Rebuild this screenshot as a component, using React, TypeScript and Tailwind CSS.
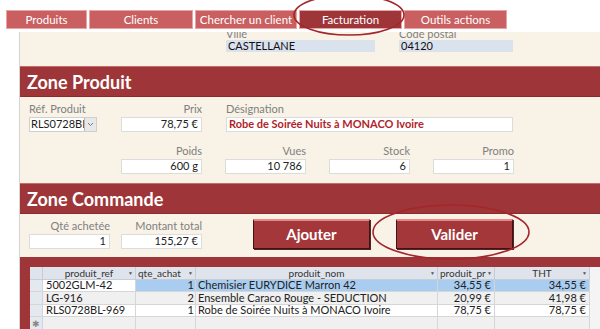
import * as React from "react"

const tabs = [
  { name: "Produits", w: "w-[81px]" },
  { name: "Clients", w: "w-[104px]" },
  { name: "Chercher un client", w: "w-[102px]" },
  { name: "Facturation", w: "w-[103px]", active: true },
  { name: "Outils actions", w: "w-[103px]" },
]

const rows = [
  { ref: "5002GLM-42", qte: "1", nom: "Chemisier EURYDICE Marron 42", prix: "34,55 €", tht: "34,55 €", selected: true },
  { ref: "LG-916", qte: "2", nom: "Ensemble Caraco Rouge - SEDUCTION", prix: "20,99 €", tht: "41,98 €", alt: true },
  { ref: "RLS0728BL-969", qte: "1", nom: "Robe de Soirée Nuits à MONACO Ivoire", prix: "78,75 €", tht: "78,75 €" },
]

// produit_pr : en-tête tronqué comme dans Access
const columns = [
  { name: "produit_ref", w: "w-[93px]" },
  { name: "qte_achat", w: "w-[60px]", left: true },
  { name: "produit_nom", w: "w-[242px]" },
  { name: "produit_pr", w: "w-[57px]", left: true },
  { name: "THT", w: "w-[95px]" },
]

// Champ de formulaire : libellé au-dessus, zone de texte en dessous
const Field = ({ label, value, w, align = "right" }: { label: string; value: string; w: string; align?: "left" | "right" }) => (
  <div className={`flex flex-col ${w}`}>
    <span className={`h-[12px] text-[11px] leading-[12px] text-[#808080] ${align === "right" ? "text-right" : "text-left"}`}>{label}</span>
    <div className={`mt-[2px] flex h-[15px] items-center border border-[#dcdcdc] bg-white px-[3px] text-[11px] text-[#222] ${align === "right" ? "justify-end" : "justify-start"}`}>
      {value}
    </div>
  </div>
)

const Band = ({ title }: { title: string }) => (
  <div className="flex h-[31px] shrink-0 items-center border-t border-[#c76a6a] border-b border-b-[#8a2a2c] bg-[#9e3538] pl-[7px]">
    <span className="text-[18px] font-bold leading-none text-white">{title}</span>
  </div>
)

const ActionButton = ({ label }: { label: string }) => (
  <button className="flex h-[30px] w-[117px] items-center justify-center border border-[#3d1416] border-t-[2px] border-t-[#e58a8a] bg-[#a3373a] text-[15px] font-bold text-white shadow-[1px_1px_0_#5a2224]">
    {label}
  </button>
)

export default function App() {
  return (
    <div className="relative h-[329px] w-[600px] overflow-hidden bg-white font-['Lato','Open_Sans',sans-serif]">
      {/* Onglets */}
      <div className="flex h-[32px] items-start gap-[2px] pl-[6px] pt-[10px]">
        {tabs.map((t) => (
          <div
            key={t.name}
            className={`flex h-[19px] items-center justify-center border border-[#e6a4a4] text-[11.5px] text-white ${t.w} ${t.active ? "bg-[#9e3538]" : "bg-[#c95f60]"}`}
          >
            {t.name}
          </div>
        ))}
      </div>

      {/* Formulaire */}
      <div className="ml-[19px] flex h-[297px] flex-col overflow-hidden border-l border-[#d4d4d4] bg-[#f9f2e7]">
        {/* Adresse (haut coupé) */}
        <div className="flex h-[34px] shrink-0 items-start gap-[24px] pl-[206px]">
          <div className="flex w-[149px] flex-col">
            <span className="-mt-[4px] h-[12px] text-[11px] leading-[11px] text-[#808080]">Ville</span>
            <div className="flex h-[12px] items-center bg-[#dae2ee] px-[2px] text-[11px] text-[#111]">CASTELLANE</div>
          </div>
          <div className="flex w-[114px] flex-col">
            <span className="-mt-[4px] h-[12px] text-[11px] leading-[11px] text-[#808080]">Code postal</span>
            <div className="flex h-[12px] items-center bg-[#dae2ee] px-[2px] text-[11px] text-[#111]">04120</div>
          </div>
        </div>

        <Band title="Zone Produit" />

        {/* Produit */}
        <div className="flex h-[86px] shrink-0 flex-col pl-[9px] pt-[6px]">
          <div className="flex items-start gap-[24px]">
            <div className="flex w-[68px] flex-col">
              <span className="h-[12px] text-[11px] leading-[12px] text-[#808080]">Réf. Produit</span>
              <div className="mt-[2px] flex h-[15px] items-center border border-[#cfcfcf] bg-white">
                <span className="w-[54px] overflow-hidden whitespace-nowrap pl-[1px] text-[11px] text-[#222]">RLS0728BL-9</span>
                <div className="flex h-full w-[12px] items-center justify-center border-l border-[#b8b8b8] bg-[#e8e8e8]">
                  <svg width="7" height="5" viewBox="0 0 7 5"><path d="M1 1 L3.5 3.5 L6 1" fill="none" stroke="#777" strokeWidth="1" /></svg>
                </div>
              </div>
            </div>
            <Field label="Prix" value="78,75 €" w="w-[81px]" />
            <div className="flex w-[287px] flex-col">
              <span className="h-[12px] text-[11px] leading-[12px] text-[#808080]">Désignation</span>
              <div className="mt-[2px] flex h-[15px] items-center border border-[#dcdcdc] bg-white px-[2px] text-[11px] font-bold text-[#b0242a]">
                Robe de Soirée Nuits à MONACO Ivoire
              </div>
            </div>
          </div>
          <div className="mt-[13px] flex items-start gap-[23px] pl-[92px]">
            <Field label="Poids" value="600 g" w="w-[81px]" />
            <Field label="Vues" value="10 786" w="w-[81px]" />
            <Field label="Stock" value="6" w="w-[81px]" />
            <Field label="Promo" value="1" w="w-[81px]" />
          </div>
        </div>

        <Band title="Zone Commande" />

        {/* Commande */}
        <div className="flex h-[43px] shrink-0 items-start pl-[9px]">
          <div className="mt-[6px] flex gap-[11px]">
            <Field label="Qté achetée" value="1" w="w-[81px]" />
            <Field label="Montant total" value="155,27 €" w="w-[81px]" />
          </div>
          <div className="ml-[51px] mt-[5px] flex gap-[26px]">
            <ActionButton label="Ajouter" />
            <ActionButton label="Valider" />
          </div>
        </div>

        {/* Sous-formulaire */}
        <div className="flex flex-1 flex-col bg-[#9e3538] pl-[10px] pt-[10px]">
          <div className="flex flex-1 bg-[#f4f4f4]">
            <div className="flex w-[560px] flex-col bg-white text-[11px] text-[#222]">
              <div className="flex h-[13px] border-b border-[#c8ccd4] bg-[#dfe4ec]">
                <div className="w-[13px] border-r border-[#c8ccd4]" />
                {columns.map((c) => (
                  <div key={c.name} className={`relative flex items-center border-r border-[#c8ccd4] ${c.w} ${c.left ? "justify-start pl-[2px]" : "justify-center"}`}>
                    <span className="whitespace-nowrap text-[10px] leading-[12px] text-[#333]">{c.name}</span>
                    <span className="absolute right-[2px] text-[5px] leading-[12px] text-[#555]">▼</span>
                  </div>
                ))}
              </div>
              {rows.map((r) => (
                <div key={r.ref} className={`flex h-[12.25px] border-b border-[#d6d6d6] ${r.alt ? "bg-[#f0f0f0]" : "bg-white"}`}>
                  <div className="w-[13px] border-r border-[#d0d4dc] bg-[#e4e8ef]" />
                  <div className={`flex w-[93px] items-center border-r border-[#d6d6d6] pl-[3px] ${r.selected ? "bg-white" : ""}`}>{r.ref}</div>
                  <div className={`flex w-[60px] items-center justify-end border-r border-[#d6d6d6] pr-[1px] ${r.selected ? "bg-[#a9cdf1]" : ""}`}>{r.qte}</div>
                  <div className={`flex w-[242px] items-center border-r border-[#d6d6d6] pl-[2px] ${r.selected ? "bg-[#a9cdf1]" : ""}`}>{r.nom}</div>
                  <div className={`flex w-[57px] items-center justify-end border-r border-[#d6d6d6] pr-[3px] ${r.selected ? "bg-[#a9cdf1]" : ""}`}>{r.prix}</div>
                  <div className={`flex w-[95px] items-center justify-end border-r border-[#d6d6d6] pr-[3px] ${r.selected ? "bg-[#a9cdf1]" : ""}`}>{r.tht}</div>
                </div>
              ))}
              <div className="flex flex-1 bg-[#f0f0f0]">
                <div className="flex w-[13px] items-center justify-center border-r border-[#d0d4dc] bg-[#e4e8ef] text-[9px] text-[#888]">✱</div>
                <div className="w-[93px] border-r border-[#d6d6d6]" />
                <div className="w-[60px] border-r border-[#d6d6d6]" />
                <div className="w-[242px] border-r border-[#d6d6d6]" />
                <div className="w-[57px] border-r border-[#d6d6d6]" />
                <div className="w-[95px] border-r border-[#d6d6d6]" />
              </div>
            </div>
          </div>
        </div>
      </div>

      {/* Annotations (ellipses) */}
      <svg className="pointer-events-none absolute left-0 top-0" width="600" height="329">
        <ellipse cx="349" cy="15" rx="55" ry="20" fill="none" stroke="#a3262b" strokeWidth="1.6" />
        <ellipse cx="451" cy="232" rx="78" ry="27" fill="none" stroke="#a3262b" strokeWidth="1.6" />
      </svg>
    </div>
  )
}
